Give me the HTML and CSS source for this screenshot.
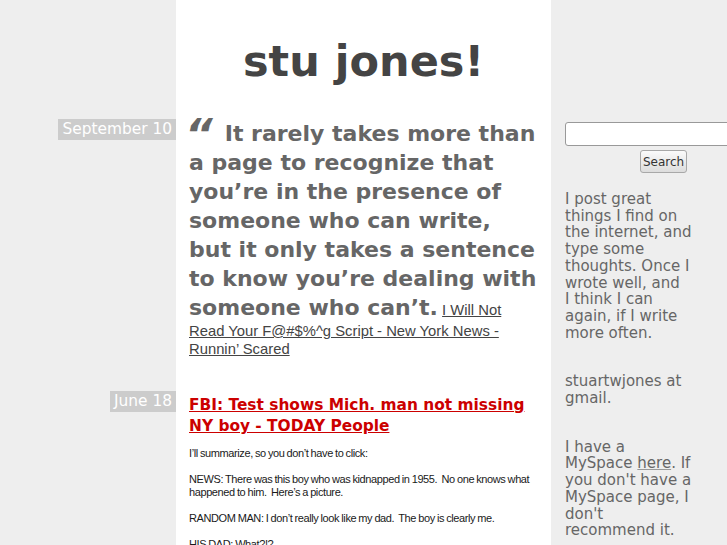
FILE: index.html
```html
<!DOCTYPE html>
<html lang="en">
<head>
<meta charset="utf-8">
<title>stu jones!</title>
<link rel="stylesheet" href="styles.css">
</head>
<body>
<div class="page">
  <div class="main">
    <header class="masthead">
      <div class="gutter"></div>
      <h1 class="title">stu jones!</h1>
    </header>

    <article class="post">
      <div class="date-col"><span class="date">September 10</span></div>
      <div class="entry">
        <p class="quote"><span class="quote-text"><span class="qmark">“</span>It rarely takes more than a page to recognize that you’re in the presence of someone who can write, but it only takes a sentence to know you’re dealing with someone who can’t.</span> <a class="source" href="#">I Will Not Read Your F@#$%^g Script - New York News - Runnin’ Scared</a></p>
      </div>
    </article>

    <article class="post post-last">
      <div class="date-col"><span class="date">June 18</span></div>
      <div class="entry">
        <h2 class="post-title"><a href="#">FBI: Test shows Mich. man not missing NY boy - TODAY People</a></h2>
        <div class="body">
          <p>I’ll summarize, so you don’t have to click:</p>
          <p>NEWS: There was this boy who was kidnapped in 1955.&nbsp; No one knows what happened to him.&nbsp; Here’s a picture.</p>
          <p>RANDOM MAN: I don’t really look like my dad.&nbsp; The boy is clearly me.</p>
          <p>HIS DAD: What?!?</p>
          <p>FBI: We ran a test.&nbsp; He is not the boy.</p>
          <p>RANDOM MAN: Oh.</p>
        </div>
      </div>
    </article>
  </div>

  <aside class="sidebar">
    <form class="search" action="#">
      <input class="search-input" type="text" name="q">
      <button class="search-button" type="button">Search</button>
    </form>
    <p class="about">I post great things I find on the internet, and type some thoughts. Once I wrote well, and I&nbsp;think I can again, if I write more often.</p>
    <p class="about">stuartwjones at gmail.</p>
    <p class="about">I have a MySpace <a href="#">here</a>. If you don't have a MySpace page, I don't recommend it.</p>
  </aside>
</div>
</body>
</html>
```

FILE: styles.css
```css
html {
  overflow: hidden;
}

body {
  margin: 0;
  background: #eeeeee;
  font-family: "DejaVu Sans", Verdana, sans-serif;
  color: #333;
}

.page {
  display: flex;
  align-items: flex-start;
  width: 762px;
  min-height: 100vh;
}

.main {
  width: 551px;
  flex: none;
  min-height: 100vh;
  background: linear-gradient(to right, transparent 176px, #ffffff 176px, #ffffff 551px, transparent 551px);
}

.masthead {
  display: grid;
  grid-template-columns: 176px 375px;
}

.title {
  margin: 0;
  padding: 36px 0 33px;
  text-align: center;
  font-family: "DejaVu Sans", Verdana, sans-serif;
  font-weight: bold;
  font-size: 43px;
  line-height: normal;
  color: #444444;
}

.post {
  display: grid;
  grid-template-columns: 176px 375px;
}

.date-col {
  display: flex;
  justify-content: flex-end;
  align-items: flex-start;
}

.date {
  display: block;
  background: #cccccc;
  color: #ffffff;
  font-size: 15.4px;
  line-height: 21px;
  padding: 0 4px;
  white-space: nowrap;
}

.entry {
  padding: 0 13px 33px;
  min-width: 0;
}

.quote {
  margin: 0;
  font-family: "Liberation Sans", Arial, sans-serif;
  font-size: 14.8px;
  line-height: 18px;
}

.quote-text {
  font-family: "DejaVu Sans", Verdana, sans-serif;
  font-weight: bold;
  font-size: 22px;
  line-height: 29px;
  color: #666666;
}

.qmark {
  display: inline-block;
  font-style: italic;
  font-size: 43px;
  line-height: 0;
  vertical-align: -8px;
  margin: 0 12px 0 -4px;
}

.source {
  color: #444444;
  text-decoration: underline;
}

.post-title {
  margin: 4px 0 10px;
  font-size: 15.4px;
  line-height: 21px;
  font-weight: bold;
}

.post-title a {
  color: #cc0000;
  text-decoration: underline;
}

.body {
  font-family: "Liberation Sans", Arial, sans-serif;
  font-size: 11px;
  letter-spacing: -0.4px;
  word-spacing: -0.5px;
  line-height: 13px;
  color: #1a1a1a;
}

.body p {
  margin: 0 0 13px;
}

.sidebar {
  width: 197px;
  flex: none;
  padding: 122px 0 0 14px;
  color: #666666;
}

.search {
  margin: 0 0 18px;
  text-align: center;
}

.search-input {
  display: block;
  box-sizing: border-box;
  width: 190px;
  height: 24px;
  margin: 0;
  border: 1px solid #999999;
  border-radius: 3px;
  background: #ffffff;
}

.search-button {
  display: inline-block;
  box-sizing: border-box;
  width: 47px;
  height: 23px;
  margin: 4px 0 0;
  padding: 0;
  border: 1px solid #a8a8a8;
  border-radius: 3px;
  background: linear-gradient(#fbfbfb, #dcdcdc);
  font-family: "DejaVu Sans", Verdana, sans-serif;
  font-size: 12px;
  color: #333333;
}

.about {
  width: 127.5px;
  margin: 0 0 32px;
  font-size: 15px;
  line-height: 16.7px;
}

.about a {
  color: #666666;
  text-decoration: underline;
  text-decoration-color: #999999;
}
```
